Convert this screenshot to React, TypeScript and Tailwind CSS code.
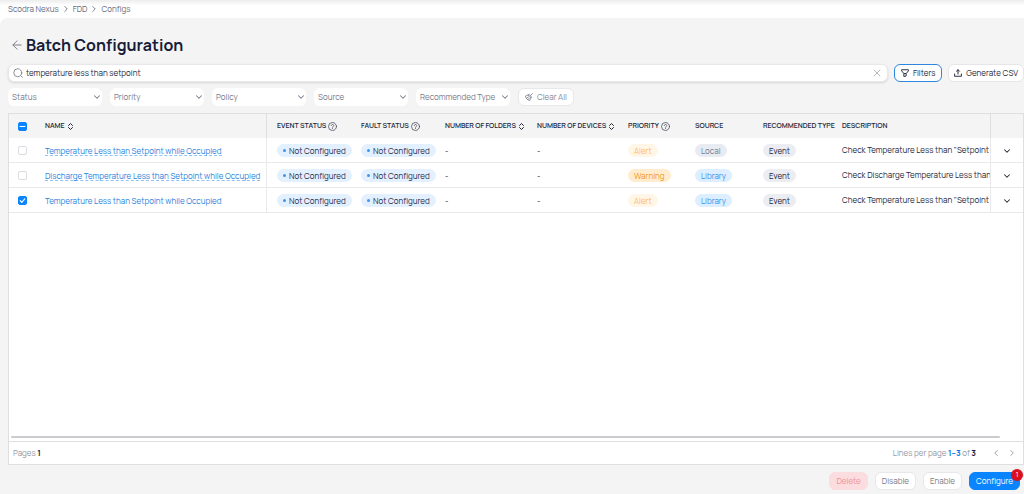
import { useEffect, useRef, useState } from "react";
import type { ReactNode } from "react";
import {
    ArrowLeft,
    ChevronDown,
    ChevronLeft,
    ChevronRight,
    X,
} from "lucide-react";
import clsx from "clsx";

type Config = {
    id: number;
    name: string;
    priority: "Alert" | "Warning";
    source: "Local" | "Library";
    description: string;
};

const CONFIGS: Config[] = [
    {
        id: 1,
        name: "Temperature Less than Setpoint while Occupied",
        priority: "Alert",
        source: "Local",
        description: 'Check Temperature Less than "Setpoint',
    },
    {
        id: 2,
        name: "Discharge Temperature Less than Setpoint while Occupied",
        priority: "Warning",
        source: "Library",
        description: "Check Discharge Temperature Less than",
    },
    {
        id: 3,
        name: "Temperature Less than Setpoint while Occupied",
        priority: "Alert",
        source: "Library",
        description: 'Check Temperature Less than "Setpoint',
    },
];

const FILTERS = ["Status", "Priority", "Policy", "Source", "Recommended Type"];

const PRIORITY_STYLES = {
    Alert: "bg-[#fff6e8] text-[#fbbc62]",
    Warning: "bg-[#ffeccf] text-[#f5960f]",
};

const SOURCE_STYLES = {
    Local: "bg-[#e8ebf1] text-[#6f7b92]",
    Library: "bg-[#dceeff] text-[#3a92ea]",
};

const CELL = "pt-px pl-2.5";
const ACTION = "h-[18px] rounded-md border px-1.5";

function SearchIcon() {
    return (
        <svg viewBox="0 0 20 20" className="size-2.5 shrink-0 text-[#7a7d8a]" fill="none" stroke="currentColor" strokeWidth="1.7" strokeLinecap="round" aria-hidden="true">
            <circle cx="9.500" cy="9.500" r="8" />
            <path d="M15.500 15.500l3.200 3.200" />
        </svg>
    );
}

function FilterIcon() {
    return (
        <svg viewBox="0 0 16 16" className="size-2 shrink-0" fill="none" stroke="currentColor" strokeWidth="1.9" strokeLinejoin="round" aria-hidden="true">
            <path d="M1 1.500h14v2L10.300 9v5L5.700 15V9L1 3.500z" />
            <path d="M5.700 9h4.600" />
        </svg>
    );
}

function ExportIcon() {
    return (
        <svg viewBox="0 0 16 16" className="size-2 shrink-0" fill="none" stroke="currentColor" strokeWidth="1.9" strokeLinecap="round" strokeLinejoin="round" aria-hidden="true">
            <path d="M8 10V1.500M5 4.500l3-3 3 3" />
            <path d="M1.200 10v4.500h13.600V10" />
        </svg>
    );
}

function BroomIcon() {
    return (
        <svg viewBox="0 0 16 16" className="size-2 shrink-0" fill="none" stroke="currentColor" strokeWidth="1.8" strokeLinecap="round" strokeLinejoin="round" aria-hidden="true">
            <path d="M15 1l-3.500 3.500M7 3.500c2.500-1.200 6.500 2.500 5.400 5.400z" />
            <path d="M7 3.500L1 6c.5 4.500 4 8.500 8.400 9l3-6" />
            <path d="M3.500 10l3.500-2M6.500 13l2.500-3" />
        </svg>
    );
}

function SortIcon() {
    return (
        <svg viewBox="0 0 10 14" className="h-[7px] w-[5px] shrink-0" fill="none" stroke="currentColor" strokeWidth="2" strokeLinecap="round" strokeLinejoin="round" aria-hidden="true">
            <path d="M1 5l4-4 4 4M1 9l4 4 4-4" />
        </svg>
    );
}

function HelpIcon() {
    return (
        <svg viewBox="0 0 18 18" className="size-[9px] shrink-0 text-[#4b4f60]" fill="none" stroke="currentColor" strokeWidth="1.600" strokeLinecap="round" aria-hidden="true">
            <circle cx="9" cy="9" r="8" />
            <path d="M6.500 7.200c0-3.200 5-3.200 5 0 0 1.800-2.500 1.800-2.500 3.600M9 13v.2" />
        </svg>
    );
}

function Pill({ className, children }: { className: string; children: ReactNode }) {
    return (
        <span className={clsx("inline-flex h-[13px] items-center rounded-full px-1.5 align-middle", className)}>
            {children}
        </span>
    );
}

function NotConfigured() {
    return (
        <Pill className="gap-[3px] bg-[#e3f0ff] text-[#1e2a4a]">
            <span className="size-[3px] rounded-full bg-[#3f94ea]" />
            Not Configured
        </Pill>
    );
}

function Checkbox({ label, checked, mixed = false, onChange }: {
    label: string;
    checked: boolean;
    mixed?: boolean;
    onChange: () => void;
}) {
    const ref = useRef<HTMLInputElement>(null);
    useEffect(() => {
        if (ref.current) ref.current.indeterminate = mixed;
    }, [mixed]);

    return (
        <span className="relative ml-[9px] block size-[9px]">
            <input
                ref={ref}
                type="checkbox"
                aria-label={label}
                checked={checked}
                onChange={onChange}
                className="block size-[9px] appearance-none rounded-xs border border-[#dcdce1] bg-white checked:border-[#0a84ff] checked:bg-[#0a84ff] indeterminate:border-[#0a84ff] indeterminate:bg-[#0a84ff]"
            />
            {(checked || mixed) && (
                <svg viewBox="0 0 9 9" className="pointer-events-none absolute inset-0 size-[9px]" fill="none" stroke="white" strokeWidth="1.1" strokeLinecap="round" strokeLinejoin="round" aria-hidden="true">
                    <path d={mixed ? "M2 4.500h5" : "M2.200 4.700l1.600 1.600 3-3.400"} />
                </svg>
            )}
        </span>
    );
}

function HeadCell({ children, sortable, help, className }: {
    children?: ReactNode;
    sortable?: boolean;
    help?: boolean;
    className?: string;
}) {
    return (
        <th className={clsx("pl-2.5 text-left font-semibold whitespace-nowrap", className)}>
            <span className={clsx("flex items-center", help ? "gap-0.5" : "gap-[3px]")}>
                {children}
                {sortable && <SortIcon />}
                {help && <HelpIcon />}
            </span>
        </th>
    );
}

export default function App() {
    const [query, setQuery] = useState("temperature less than setpoint");
    const [selected, setSelected] = useState<number[]>([3]);

    const allSelected = selected.length === CONFIGS.length;

    const toggle = (id: number) =>
        setSelected((prev) => (prev.includes(id) ? prev.filter((x) => x !== id) : [...prev, id]));

    return (
        <div className="flex h-screen flex-col bg-white font-['Manrope','Inter',sans-serif] text-[8px] leading-3 text-[#23263a]">
            <nav aria-label="Breadcrumb" className="flex h-[18px] shrink-0 items-center gap-0.5 bg-linear-to-b from-[#ededed] to-white to-30% px-2 text-[#666a7a]">
                <a href="#nexus">Scodra Nexus</a>
                <ChevronRight className="size-2.5" aria-hidden="true" />
                <a href="#fdd">FDD</a>
                <ChevronRight className="size-2.5" aria-hidden="true" />
                <a href="#configs">Configs</a>
            </nav>

            <main className="flex min-h-0 flex-1 flex-col rounded-tl-lg bg-[#f4f4f4] pl-2">
                <header className="mt-[15px] flex h-6 items-center gap-0.5 pl-0.5">
                    <button type="button" aria-label="Back" className="text-[#7c7f8c]">
                        <ArrowLeft className="size-3.5" strokeWidth={1.7} aria-hidden="true" />
                    </button>
                    <h1 className="text-[16px] leading-6 font-bold text-[#171c3a]">Batch Configuration</h1>
                </header>

                {/* Search */}
                <div className="mt-[7px] flex items-center gap-1.5">
                    <label className="flex h-[18px] min-w-0 flex-1 items-center gap-[3px] rounded-md border border-[#e8e8ea] bg-white px-1 shadow-sm">
                        <SearchIcon />
                        <input
                            type="text"
                            aria-label="Search configs"
                            value={query}
                            onChange={(e) => setQuery(e.target.value)}
                            className="min-w-0 flex-1 bg-transparent outline-none"
                        />
                        <button type="button" aria-label="Clear search" onClick={() => setQuery("")} className="text-[#a4a6ae]">
                            <X className="size-3" strokeWidth={1.6} aria-hidden="true" />
                        </button>
                    </label>
                    <button type="button" className="flex h-[18px] items-center gap-1 rounded-md border border-[#2f86df] bg-white px-1.5">
                        <FilterIcon />
                        Filters
                    </button>
                    <button type="button" className="flex h-[18px] items-center gap-1 rounded-md border border-[#e6e6e8] bg-white px-[5px]">
                        <ExportIcon />
                        Generate CSV
                    </button>
                </div>

                {/* Filters */}
                <div className="mt-1.5 mb-[7px] flex items-center gap-2 text-[#777a88]">
                    {FILTERS.map((name) => (
                        <div key={name} className="relative w-[94px]">
                            <select aria-label={name} className="block h-[18px] w-full appearance-none rounded-md bg-white pr-3 pl-1 outline-none">
                                <option>{name}</option>
                            </select>
                            <ChevronDown className="pointer-events-none absolute top-1 right-0 size-2.5" strokeWidth={2.5} aria-hidden="true" />
                        </div>
                    ))}
                    <button type="button" className="flex h-[18px] items-center gap-1 rounded-md border border-[#e8e8ea] bg-white px-1.5 text-[#85889a]">
                        <BroomIcon />
                        Clear All
                    </button>
                </div>

                <section className="flex min-h-0 flex-1 flex-col border border-[#dfdfe1] bg-white">
                    <table className="w-full table-fixed border-separate border-spacing-0">
                        <colgroup>
                            <col className="w-[26px]" />
                            <col className="w-[232px]" />
                            <col className="w-[84px]" />
                            <col className="w-[84px]" />
                            <col className="w-[92px]" />
                            <col className="w-[91px]" />
                            <col className="w-[67px]" />
                            <col className="w-[68px]" />
                            <col className="w-[79px]" />
                            <col />
                            <col className="w-[33px]" />
                        </colgroup>
                        <thead className="bg-[#f4f4f4] text-[7px]">
                            <tr className="h-6">
                                <th>
                                    <Checkbox
                                        label="Select all"
                                        checked={allSelected}
                                        mixed={selected.length > 0 && !allSelected}
                                        onChange={() => setSelected(allSelected ? [] : CONFIGS.map((c) => c.id))}
                                    />
                                </th>
                                <HeadCell sortable className="border-r border-[#dfdfe1]">NAME</HeadCell>
                                <HeadCell help>EVENT STATUS</HeadCell>
                                <HeadCell help>FAULT STATUS</HeadCell>
                                <HeadCell sortable>NUMBER OF FOLDERS</HeadCell>
                                <HeadCell sortable>NUMBER OF DEVICES</HeadCell>
                                <HeadCell help>PRIORITY</HeadCell>
                                <HeadCell>SOURCE</HeadCell>
                                <HeadCell>RECOMMENDED TYPE</HeadCell>
                                <HeadCell>DESCRIPTION</HeadCell>
                                <th aria-label="Details" className="border-l border-[#dfdfe1]" />
                            </tr>
                        </thead>
                        <tbody className="[&_td]:border-b [&_td]:border-[#e9e9eb] [&_td]:whitespace-nowrap">
                            {CONFIGS.map((config) => (
                                <tr key={config.id} className="h-[25px]">
                                    <td className="pt-px">
                                        <Checkbox
                                            label={`Select ${config.name}`}
                                            checked={selected.includes(config.id)}
                                            onChange={() => toggle(config.id)}
                                        />
                                    </td>
                                    <td className={clsx(CELL, "border-r")}>
                                        <a
                                            href={`#config-${config.id}`}
                                            className={clsx(
                                                "inline-block h-[11px] border-b border-dashed leading-[11px] text-[#1f82dd]",
                                                selected.includes(config.id) ? "border-transparent" : "border-[#8fc2f5]",
                                            )}
                                        >
                                            {config.name}
                                        </a>
                                    </td>
                                    <td className={CELL}><NotConfigured /></td>
                                    <td className={CELL}><NotConfigured /></td>
                                    <td className={CELL}>-</td>
                                    <td className={CELL}>-</td>
                                    <td className={CELL}><Pill className={PRIORITY_STYLES[config.priority]}>{config.priority}</Pill></td>
                                    <td className={CELL}><Pill className={SOURCE_STYLES[config.source]}>{config.source}</Pill></td>
                                    <td className={CELL}><Pill className="bg-[#ececf3]">Event</Pill></td>
                                    <td className="overflow-hidden pl-2.5">{config.description}</td>
                                    <td className="border-l pt-px">
                                        <button type="button" aria-label="Expand row" className="mx-auto block">
                                            <ChevronDown className="size-2.5" strokeWidth={2.5} aria-hidden="true" />
                                        </button>
                                    </td>
                                </tr>
                            ))}
                        </tbody>
                    </table>

                    <div className="mt-auto mr-[23px] mb-[3px] ml-0.5 h-0.5 shrink-0 rounded-full bg-[#cbcbcf]" />
                    <footer className="flex h-[23px] shrink-0 items-center justify-between border-t border-[#dfdfe1] pr-1.5 pl-1 text-[#9597a3]">
                        <p>Pages <b className="text-[#171c3a]">1</b></p>
                        <div className="flex items-center">
                            <p>
                                Lines per page <b className="text-[#0a7ae6]">1–3</b> of <b className="text-[#171c3a]">3</b>
                            </p>
                            <button type="button" aria-label="Previous page" className="ml-[15px]">
                                <ChevronLeft className="size-2.5" strokeWidth={2.2} aria-hidden="true" />
                            </button>
                            <button type="button" aria-label="Next page" className="ml-1.5">
                                <ChevronRight className="size-2.5" strokeWidth={2.2} aria-hidden="true" />
                            </button>
                        </div>
                    </footer>
                </section>

                {/* Bulk actions */}
                <div className="flex h-[29px] shrink-0 items-center justify-end gap-[7px] pt-0.5 pr-1">
                    <button type="button" className={clsx(ACTION, "border-[#fbdcdf] bg-[#fbdcdf] text-[#f0939c]")}>Delete</button>
                    <button type="button" className={clsx(ACTION, "border-[#e8e8ea] bg-white text-[#777a88]")}>Disable</button>
                    <button type="button" className={clsx(ACTION, "border-[#e8e8ea] bg-white text-[#777a88]")}>Enable</button>
                    <button type="button" className={clsx(ACTION, "relative border-[#0a84ff] bg-[#0a84ff] text-white")}>
                        Configure
                        <span className="absolute -top-1 -right-1 flex size-3 items-center justify-center rounded-full bg-[#d9101f] text-[7px] leading-3">
                            {selected.length}
                        </span>
                    </button>
                </div>
            </main>
        </div>
    );
}
